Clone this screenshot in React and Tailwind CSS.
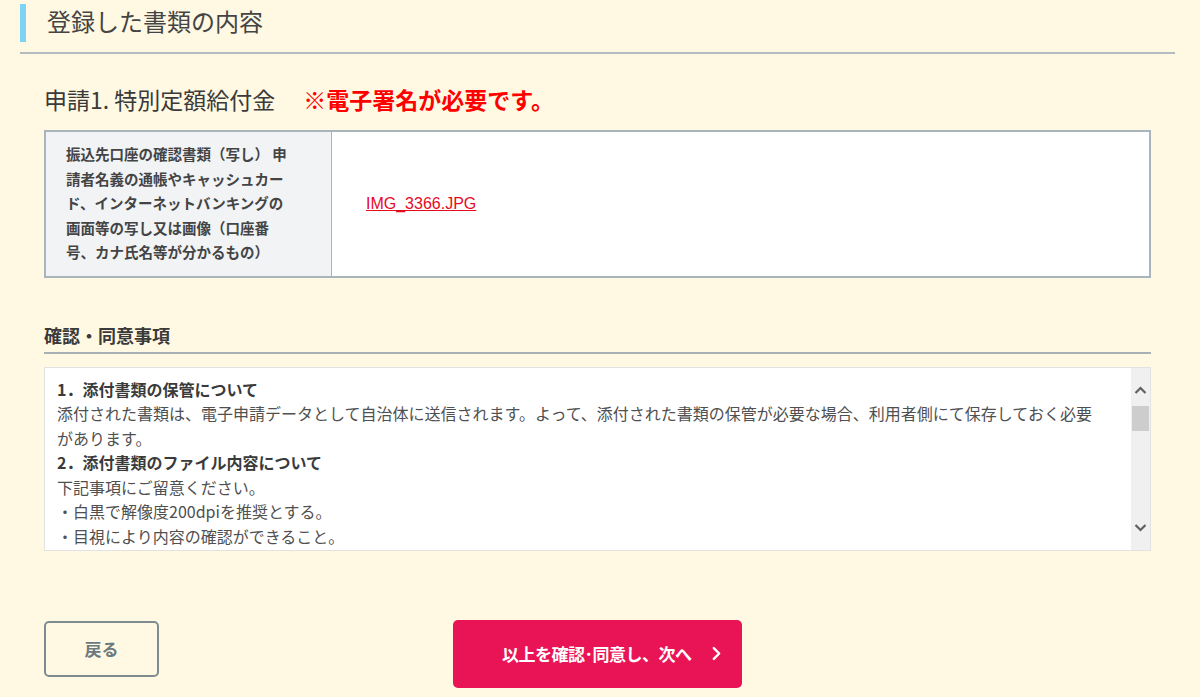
const jp = { fontFamily: '"Noto Sans CJK JP", "Noto Sans", sans-serif' };

function Chevron({ className }) {
  return (
    <svg viewBox="0 0 10 16" className={className} fill="none" stroke="currentColor" strokeWidth="2.6" strokeLinecap="round" strokeLinejoin="round">
      <polyline points="2,2 8,8 2,14" />
    </svg>
  );
}

function ScrollBar() {
  return (
    <div className="flex w-[19px] shrink-0 flex-col items-center bg-[#f0f0f0]">
      <svg viewBox="0 0 12 8" className="mt-[18px] h-[8px] w-[13px] text-[#606060]" fill="none" stroke="currentColor" strokeWidth="2.2">
        <polyline points="1,7 6,2 11,7" />
      </svg>
      <div className="mt-[12px] h-[25px] w-[17px] bg-[#cdcdcd]" />
      <div className="flex-1" />
      <svg viewBox="0 0 12 8" className="mb-[18px] h-[8px] w-[13px] text-[#606060]" fill="none" stroke="currentColor" strokeWidth="2.2">
        <polyline points="1,1 6,6 11,1" />
      </svg>
    </div>
  );
}

export default function App() {
  return (
    <div className="h-[697px] overflow-hidden bg-[#fff8e2] pl-[20px] pr-[25px] text-[#444]" style={jp}>
      <div className="pt-[4px]">
        <div className="flex h-[38px] items-center border-l-[6px] border-[#7dd3f5] pb-[4px] pl-[21px] text-[24px] leading-none text-[#444]">
          登録した書類の内容
        </div>
        <div className="mt-[10px] h-[2px] bg-[#b4bcc0]" />
      </div>

      <div className="ml-[24px] mr-[24px]">
        <div className="mt-[30px] flex items-center text-[23px] leading-[30px]">
          <span className="text-[#3a3a3a]">申請1. 特別定額給付金</span>
          <span className="ml-[28px] font-bold text-[#ff0000]">※電子署名が必要です。</span>
        </div>

        <div className="mt-[16px] flex border-2 border-[#a9b5bd] bg-white">
          <div className="w-[286px] shrink-0 border-r border-[#a9b5bd] bg-[#f1f3f5] pb-[11px] pl-[20px] pt-[10px] text-[14.5px] font-bold leading-[24.5px] text-[#444]">
            <div className="whitespace-nowrap">振込先口座の確認書類（写し） 申</div>
            <div className="whitespace-nowrap">請者名義の通帳やキャッシュカー</div>
            <div className="whitespace-nowrap">ド、インターネットバンキングの</div>
            <div className="whitespace-nowrap">画面等の写し又は画像（口座番</div>
            <div className="whitespace-nowrap">号、カナ氏名等が分かるもの）</div>
          </div>
          <div className="flex flex-1 items-center pl-[34px]">
            <a href="#" className="text-[16px] text-[#e60b1f] underline" style={{ fontFamily: '"Liberation Sans", Arial, sans-serif' }}>
              IMG_3366.JPG
            </a>
          </div>
        </div>

        <div className="mt-[45px] border-b-2 border-[#a6b0b5] pb-[5px] text-[18px] font-bold leading-[24px] text-[#3a3a3a]">
          確認・同意事項
        </div>

        <div className="mt-[13px] flex h-[184px] border border-[#e2e2e2] bg-white">
          <div className="flex-1 overflow-hidden pl-[12px] pr-[24px] pt-[9px] text-[16px] leading-[24.5px] text-[#505050]">
            <p className="font-bold text-[#3a3a3a]">1．添付書類の保管について</p>
            <p>添付された書類は、電子申請データとして自治体に送信されます。よって、添付された書類の保管が必要な場合、利用者側にて保存しておく必要があります。</p>
            <p className="font-bold text-[#3a3a3a]">2．添付書類のファイル内容について</p>
            <p>下記事項にご留意ください。</p>
            <p>・白黒で解像度200dpiを推奨とする。</p>
            <p>・目視により内容の確認ができること。</p>
          </div>
          <ScrollBar />
        </div>

        <div className="mt-[69px] flex items-start">
          <button className="mt-[1px] flex h-[56px] w-[115px] items-center justify-center rounded-[5px] border-2 border-[#7e8c92] bg-transparent text-[17px] font-bold text-[#6b7a80]">
            戻る
          </button>
          <button className="ml-[294px] flex h-[68px] w-[289px] items-center rounded-[5px] bg-[#e91456] pl-[49px] text-[17px] font-bold tracking-[-0.5px] text-white">
            <span>以上を確認･同意し、次へ</span>
            <Chevron className="ml-[20px] h-[15px] w-[9px]" />
          </button>
        </div>
      </div>
    </div>
  );
}
